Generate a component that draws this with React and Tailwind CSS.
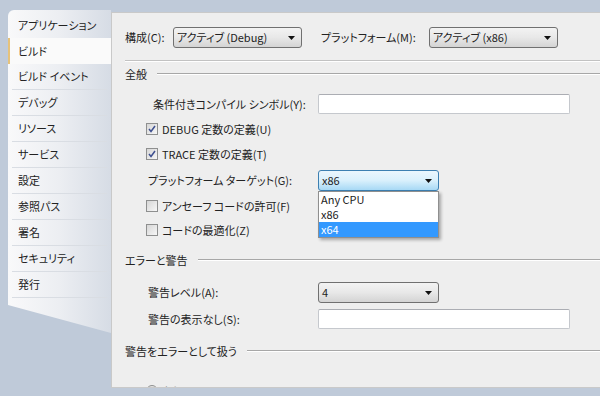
import React from 'react';

const tabs = [
  'アプリケーション', 'ビルド', 'ビルド イベント', 'デバッグ', 'リソース', 'サービス',
  '設定', '参照パス', '署名', 'セキュリティ', '発行',
];

function Arrow() {
  return (
    <svg width="7" height="4" viewBox="0 0 7 4" className="shrink-0">
      <polygon points="0,0 7,0 3.5,4" fill="#111" />
    </svg>
  );
}

function Select({ width, value, focus }) {
  return (
    <div
      className={`${width} h-[21px] shrink-0 rounded-[3px] border flex items-center justify-between pl-[3px] pr-[6px] ${
        focus
          ? 'border-[#3c7fb1] bg-gradient-to-b from-[#eaf6fd] via-[#d9f0fc] to-[#a7d9f5]'
          : 'border-[#707070] bg-gradient-to-b from-[#f3f3f3] via-[#e8e8e8] to-[#d4d4d4]'
      }`}
    >
      <span className="leading-none whitespace-nowrap">{value}</span>
      <Arrow />
    </div>
  );
}

function TextBox() {
  return <div className="w-[252px] h-[20px] bg-white border border-[#c5c8cd] border-t-[#abadb3] rounded-[2px]" />;
}

function Check({ checked, label }) {
  return (
    <div className="h-[20px] flex items-center gap-[4px] pl-[21px]">
      <div className="w-[12px] h-[12px] border border-[#8e8f8f] bg-gradient-to-br from-[#d6d6d6] to-[#f7f7f7] flex items-center justify-center">
        {checked && (
          <svg width="8" height="8" viewBox="0 0 8 8">
            <path d="M1 4 L3 6.5 L7 1" fill="none" stroke="#3d4f8f" strokeWidth="1.5" />
          </svg>
        )}
      </div>
      <span className="whitespace-nowrap">{label}</span>
    </div>
  );
}

function Heading({ children, className }) {
  return (
    <div className={`h-[18px] flex items-center gap-[10px] ${className}`}>
      <span className="whitespace-nowrap">{children}</span>
      <div className="flex-1 h-[2px] border-t border-[#a7a7a7] bg-white" />
    </div>
  );
}

export default function App() {
  return (
    <div className="w-[600px] h-[396px] overflow-hidden flex pt-[10px] pb-[8px] pl-[8px] bg-[#bfcad9] text-[11px] text-[#222] font-['Noto_Sans_CJK_JP','Noto_Sans',sans-serif] [font-feature-settings:'palt']">
      {/* left tab list */}
      <aside className="w-[103px] shrink-0 flex flex-col">
        <div className="rounded-tl-[6px] pt-[2px] bg-gradient-to-r from-[#f9f9fa] via-[#eceef2] to-[#d6dce5]">
          {tabs.map((t, i) =>
            i === 1 ? (
              <div key={t} className="h-[26px] flex items-center pl-[8px] border-l-2 border-[#e6c27a] bg-[#fafafa]">
                {t}
              </div>
            ) : (
              <div
                key={t}
                className={`h-[26px] mx-[4px] flex items-center pl-[6px] whitespace-nowrap ${i === 0 ? '' : 'border-b border-[#d9dde3]'}`}
              >
                {t}
              </div>
            )
          )}
        </div>
        <div className="h-[35px] bg-gradient-to-r from-[#f9f9fa] via-[#eceef2] to-[#d6dce5] [clip-path:polygon(0_0,100%_0,100%_100%,0_20%)]" />
      </aside>

      {/* property panel */}
      <main className="flex-1 mt-[2px] bg-[#eeeeee] border border-r-0 border-[#c9c9c9] overflow-hidden pl-[13px]">
        <div className="mt-[14px] h-[21px] flex items-center">
          <span className="w-[48px] whitespace-nowrap">構成(C):</span>
          <Select width="w-[129px]" value="アクティブ (Debug)" />
          <span className="ml-[19px] w-[108px] whitespace-nowrap">プラットフォーム(M):</span>
          <Select width="w-[129px]" value="アクティブ (x86)" />
        </div>

        <div className="mt-[12px] h-[2px] border-t border-[#c2c2c2] bg-white" />

        <Heading className="mt-[3px]">全般</Heading>

        <div className="mt-[11px] h-[20px] flex items-center">
          <span className="w-[193px] pl-[28px] whitespace-nowrap">条件付きコンパイル シンボル(Y):</span>
          <TextBox />
        </div>

        <div className="mt-[5px]"><Check checked label="DEBUG 定数の定義(U)" /></div>
        <div className="mt-[5px]"><Check checked label="TRACE 定数の定義(T)" /></div>

        <div className="mt-[6px] h-[21px] flex items-center">
          <span className="w-[193px] pl-[23px] whitespace-nowrap">プラットフォーム ターゲット(G):</span>
          <div className="relative">
            <Select width="w-[121px]" value="x86" focus />
            <div className="absolute top-[21px] left-0 w-[121px] z-10 bg-white border border-[#8f8f8f] shadow-[2px_2px_3px_rgba(0,0,0,0.3)]">
              <div className="h-[15px] leading-[15px] pl-[2px]">Any CPU</div>
              <div className="h-[15px] leading-[15px] pl-[2px]">x86</div>
              <div className="h-[15px] leading-[15px] pl-[2px] bg-[#3399ff] text-white">x64</div>
            </div>
          </div>
        </div>

        <div className="mt-[5px]"><Check label="アンセーフ コードの許可(F)" /></div>
        <div className="mt-[4px]"><Check label="コードの最適化(Z)" /></div>

        <Heading className="mt-[11px]">エラーと警告</Heading>

        <div className="mt-[13px] h-[21px] flex items-center">
          <span className="w-[193px] pl-[23px] whitespace-nowrap">警告レベル(A):</span>
          <Select width="w-[121px]" value="4" />
        </div>

        <div className="mt-[6px] h-[20px] flex items-center">
          <span className="w-[193px] pl-[23px] whitespace-nowrap">警告の表示なし(S):</span>
          <TextBox />
        </div>

        <Heading className="mt-[13px]">警告をエラーとして扱う</Heading>

        <div className="mt-[21px] h-[20px] flex items-center gap-[4px] pl-[21px]">
          <div className="w-[12px] h-[12px] rounded-full border border-[#8e8f8f] bg-gradient-to-br from-[#dcdcdc] to-[#f7f7f7]" />
          <span>なし(N)</span>
        </div>
      </main>
    </div>
  );
}
